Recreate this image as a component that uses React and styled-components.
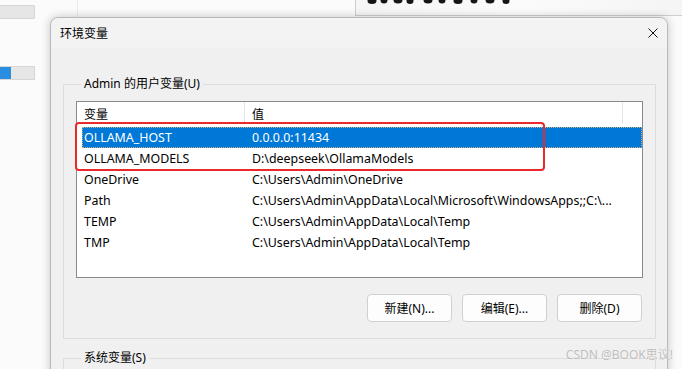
import React from "react";
import styled, { createGlobalStyle } from "styled-components";

const GlobalStyle = createGlobalStyle`
  html, body { margin: 0; padding: 0; }
  body {
    background: #fbfbfb;
    font-family: "Segoe UI", "Noto Sans", "Noto Sans CJK SC", sans-serif;
    -webkit-font-smoothing: antialiased;
  }
`;

const Desktop = styled.div`
  position: relative;
  width: 682px;
  height: 369px;
  overflow: hidden;
  background: #fbfbfb;
`;

const BackLeft = styled.div`
  position: absolute;
  left: -1px;
  top: -1px;
  width: 79px;
  height: 120px;
  border-right: 1px solid #ececec;
  display: flex;
  flex-direction: column;
  gap: 47px;
  padding-top: 6px;
  box-sizing: border-box;
`;

const Track = styled.div`
  width: 36px;
  height: 14px;
  background: #e6e6e6;
  border: 1px solid #d6d6d6;
  box-sizing: border-box;
  display: flex;
`;

const Fill = styled.div`
  width: ${(p) => p.$w}px;
  background: #2a8ee0;
`;

const BackTop = styled.div`
  position: absolute;
  left: 355px;
  top: -12px;
  width: 340px;
  height: 28px;
  border: 1px solid #cfcfcf;
  background: linear-gradient(90deg, #f6f6f6 0%, #fbfbfb 50%, #f4f4f4 100%);
  overflow: hidden;
  box-sizing: border-box;
  display: flex;
  align-items: flex-start;
`;

const Blobs = styled.svg`
  display: block;
  margin: 11px 0 0 6px;
`;

const Dialog = styled.div`
  position: absolute;
  left: 50px;
  top: 17px;
  width: 618px;
  height: 400px;
  background: #f0f0f0;
  border: 1px solid #b9b9b9;
  border-radius: 8px 8px 0 0;
  box-shadow: 0 0 10px rgba(0, 0, 0, 0.22);
  box-sizing: border-box;
  display: flex;
  flex-direction: column;
  font-family: "Segoe UI", "Noto Sans", "Noto Sans CJK SC", sans-serif;
  font-size: 12px;
  color: #000;
`;

const TitleBar = styled.div`
  height: 30px;
  display: flex;
  align-items: center;
  justify-content: space-between;
  padding: 0 9px 2px 9px;
  box-sizing: border-box;
  background: #f3f3f3;
  border-radius: 8px 8px 0 0;
`;

const Title = styled.div`
  font-family: "Noto Sans CJK SC", sans-serif;
  font-size: 12px;
`;

const Close = styled.div`
  width: 10px;
  height: 10px;
  display: flex;
  margin-top: 2px;
`;

const Body = styled.div`
  display: flex;
  flex-direction: column;
  padding: 28px 11px 0 12px;
  gap: 11px;
`;

const Group = styled.fieldset`
  margin: 0;
  border: 1px solid #dcdcdc;
  border-radius: 1px;
  padding: 9px 12px 16px 12px;
  display: flex;
  flex-direction: column;
  gap: 16px;
`;

const Legend = styled.legend`
  padding: 0 3px;
  margin-left: 5px;
  font-family: "Noto Sans", "Noto Sans CJK SC", sans-serif;
  font-size: 12px;
  line-height: 16px;
  color: #000;
`;

const ListBox = styled.div`
  position: relative;
  height: 177px;
  background: #fff;
  border: 1px solid #858a91;
  box-sizing: border-box;
  display: flex;
  flex-direction: column;
`;

const Header = styled.div`
  display: grid;
  grid-template-columns: 168px 378px;
  height: 22px;
  margin-bottom: 3px;
`;

const HeadCell = styled.div`
  display: flex;
  align-items: center;
  padding-left: 7px;
  border-right: 1px solid #e5e5e5;
  font-family: "Noto Sans CJK SC", sans-serif;
  font-size: 12px;
`;

const Row = styled.div`
  display: grid;
  grid-template-columns: 170px 371px;
  height: 21px;
  margin-left: 5px;
  align-items: center;
  box-sizing: border-box;
  background: ${(p) => (p.$sel ? "#0078d7" : "transparent")};
  color: ${(p) => (p.$sel ? "#fff" : "#000")};
  outline: ${(p) => (p.$sel ? "1px dotted rgba(255,190,120,0.8)" : "none")};
  outline-offset: -1px;
  font-family: "Noto Sans", sans-serif;
  font-size: 12.4px;
  white-space: nowrap;
`;

const Cell = styled.div`
  padding-left: ${(p) => (p.$first ? 2 : 0)}px;
  overflow: hidden;
`;

const Highlight = styled.div`
  position: absolute;
  left: -2px;
  top: 20px;
  width: 470px;
  height: 49px;
  border: 2.5px solid #ea2a2a;
  border-radius: 4px;
  box-sizing: border-box;
  pointer-events: none;
`;

const Buttons = styled.div`
  display: flex;
  justify-content: flex-end;
  gap: 10px;
  padding-right: 1px;
`;

const Button = styled.button`
  width: 85px;
  height: 28px;
  background: #fdfdfd;
  border: 1px solid #d0d0d0;
  border-radius: 4px;
  font-family: "Noto Sans", "Noto Sans CJK SC", sans-serif;
  font-size: 12px;
  color: #000;
  padding: 0;
`;

const Watermark = styled.div`
  position: absolute;
  right: 9px;
  bottom: 6px;
  font-family: "Noto Sans", "Noto Sans CJK SC", sans-serif;
  font-size: 12px;
  color: #bdbdbd;
  text-shadow: 0 0 1px #fff;
`;

const rows = [
  ["OLLAMA_HOST", "0.0.0.0:11434", true],
  ["OLLAMA_MODELS", "D:\\deepseek\\OllamaModels"],
  ["OneDrive", "C:\\Users\\Admin\\OneDrive"],
  ["Path", "C:\\Users\\Admin\\AppData\\Local\\Microsoft\\WindowsApps;;C:\\..."],
  ["TEMP", "C:\\Users\\Admin\\AppData\\Local\\Temp"],
  ["TMP", "C:\\Users\\Admin\\AppData\\Local\\Temp"],
];

const blobXs = [10, 22, 36, 48, 66, 80, 96, 112, 128, 144];

export default function App() {
  return (
    <>
      <GlobalStyle />
      <Desktop>
        <BackLeft>
          <Track />
          <Track>
            <Fill $w={11} />
          </Track>
        </BackLeft>
        <BackTop>
          <Blobs width="170" height="6" viewBox="0 0 170 6">
            {blobXs.map((x, i) => (
              <ellipse
                key={x}
                cx={x}
                cy={i % 3 === 0 ? 1 : 0}
                rx={i % 2 ? 3.5 : 4.5}
                ry={i % 3 === 0 ? 3 : 3.5}
                fill="#161616"
              />
            ))}
          </Blobs>
        </BackTop>
        <Dialog>
          <TitleBar>
            <Title>环境变量</Title>
            <Close>
              <svg width="10" height="10" viewBox="0 0 10 10">
                <path d="M0.5 0.5L9.5 9.5M9.5 0.5L0.5 9.5" stroke="#111" strokeWidth="1" />
              </svg>
            </Close>
          </TitleBar>
          <Body>
            <Group>
              <Legend>Admin 的用户变量(U)</Legend>
              <ListBox>
                <Header>
                  <HeadCell>变量</HeadCell>
                  <HeadCell>值</HeadCell>
                </Header>
                {rows.map(([k, v, sel]) => (
                  <Row key={k} $sel={sel}>
                    <Cell $first>{k}</Cell>
                    <Cell>{v}</Cell>
                  </Row>
                ))}
                <Highlight />
              </ListBox>
              <Buttons>
                <Button>新建(N)...</Button>
                <Button>编辑(E)...</Button>
                <Button>删除(D)</Button>
              </Buttons>
            </Group>
            <Group>
              <Legend>系统变量(S)</Legend>
            </Group>
          </Body>
        </Dialog>
        <Watermark>CSDN @BOOK思议!</Watermark>
      </Desktop>
    </>
  );
}
